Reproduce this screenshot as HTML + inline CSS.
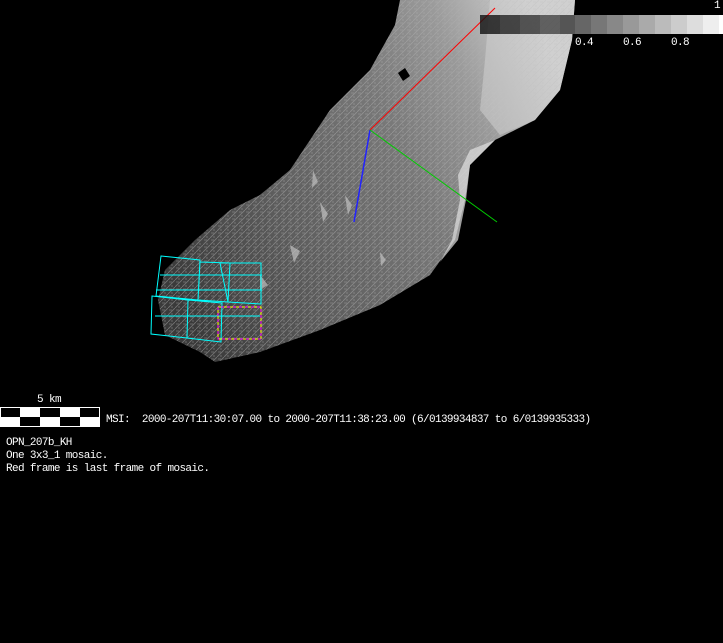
<!DOCTYPE html>
<html><head><style>
body{margin:0;background:#000;width:723px;height:643px;overflow:hidden;position:relative;font-family:"Liberation Mono",monospace;}
.t{position:absolute;color:#fff;font-size:11px;letter-spacing:-0.62px;white-space:pre;line-height:13px;}
</style></head><body>
<svg width="723" height="643" style="position:absolute;left:0;top:0">
<defs>
<linearGradient id="g" x1="0" y1="0.7" x2="1" y2="0.3">
<stop offset="0" stop-color="#3a3a3a"/><stop offset="0.3" stop-color="#5e5e5e"/><stop offset="0.6" stop-color="#787878"/><stop offset="0.8" stop-color="#9a9a9a"/><stop offset="1" stop-color="#d0d0d0"/>
</linearGradient>
<pattern id="p" width="7" height="7" patternUnits="userSpaceOnUse">
<path d="M0 7L7 0M1 2h3M4 5v2" stroke="#b0b0b0" stroke-width="0.8" opacity="0.5"/>
</pattern>
</defs>
<path d="M400 0L575 0L572 40L560 90L535 120L495 140L470 165L465 200L455 240L430 275L380 305L320 330L260 352L215 362L200 352L165 335L158 300L165 270L195 240L230 210L260 195L290 170L330 110L370 70L395 25Z" fill="url(#g)"/>
<path d="M400 0L575 0L572 40L560 90L535 120L495 140L470 165L465 200L455 240L430 275L380 305L320 330L260 352L215 362L200 352L165 335L158 300L165 270L195 240L230 210L260 195L290 170L330 110L370 70L395 25Z" fill="url(#p)"/>
<path d="M490 0L575 0L572 40L560 90L535 120L500 135L480 110L485 60Z" fill="#cfcfcf" opacity="0.55"/>
<path d="M470 165L495 140L470 150L458 175L460 200L452 240L440 262L458 240L466 200Z" fill="#e0e0e0" opacity="0.7"/>
<path d="M398 73l7-5 5 8-7 5z" fill="#000"/>
<path d="M313 170l5 12-6 6z M320 202l8 12-5 8z M345 195l7 10-4 10z M290 245l10 6-6 12z M260 275l8 10-8 5z M380 252l6 8-5 6z" fill="#c0c0c0" opacity="0.7"/>
<path d="M370 130L495 8" stroke="#f00" stroke-width="1"/>
<path d="M370 130L354 222" stroke="#22f" stroke-width="1.5"/>
<path d="M370 130L497 222" stroke="#0c0" stroke-width="1"/>
<g stroke="#0ff" stroke-width="1" fill="none">
<path d="M161 256L200 260L198 300L156 296Z M152 296L188 300L187 338L151 334Z M200 262L230 263L228 302L198 300Z M188 300L222 303L221 342L187 338Z M220 263L261 263L261 304L228 302Z"/>
<path d="M160 275H262 M155 316H260 M156 290H262"/>
</g>
<path d="M218 307H261V339H218Z" stroke="#ff0" stroke-width="1" fill="none" stroke-dasharray="3 3"/>
<path d="M218 307H261V339H218Z" stroke="#f0f" stroke-width="1" fill="none" stroke-dasharray="3 3" stroke-dashoffset="3"/>
<g>
<rect x="480" y="15" width="20" height="19" fill="#111" opacity="0.8"/>
<rect x="500" y="15" width="20" height="19" fill="#222" opacity="0.8"/>
<rect x="520" y="15" width="20" height="19" fill="#333" opacity="0.8"/>
<rect x="540" y="15" width="20" height="19" fill="#444" opacity="0.8"/>
<rect x="560" y="15" width="15" height="19" fill="#555"/>
<rect x="575" y="15" width="16" height="19" fill="#666"/>
<rect x="591" y="15" width="16" height="19" fill="#777"/>
<rect x="607" y="15" width="16" height="19" fill="#888"/>
<rect x="623" y="15" width="16" height="19" fill="#999"/>
<rect x="639" y="15" width="16" height="19" fill="#aaa"/>
<rect x="655" y="15" width="16" height="19" fill="#bbb"/>
<rect x="671" y="15" width="16" height="19" fill="#ccc"/>
<rect x="687" y="15" width="16" height="19" fill="#ddd"/>
<rect x="703" y="15" width="16" height="19" fill="#eee"/>
<rect x="719" y="15" width="4" height="19" fill="#fff"/>
</g>
<g>
<rect x="0" y="407" width="100" height="20" fill="#fff"/>
<rect x="1" y="408" width="19" height="9" fill="#000"/><rect x="40" y="408" width="20" height="9" fill="#000"/><rect x="80" y="408" width="19" height="9" fill="#000"/>
<rect x="20" y="417" width="20" height="9" fill="#000"/><rect x="60" y="417" width="20" height="9" fill="#000"/>
</g>
</svg>
<div class="t" style="left:714px;top:0px">1</div>
<div class="t" style="left:575px;top:37px">0.4</div>
<div class="t" style="left:623px;top:37px">0.6</div>
<div class="t" style="left:671px;top:37px">0.8</div>
<div class="t" style="left:37px;top:394px">5 km</div>
<div class="t" style="left:106px;top:414px">MSI:  2000-207T11:30:07.00 to 2000-207T11:38:23.00 (6/0139934837 to 6/0139935333)</div>
<div class="t" style="left:6px;top:437px">OPN_207b_KH
One 3x3_1 mosaic.
Red frame is last frame of mosaic.</div>
</body></html>
